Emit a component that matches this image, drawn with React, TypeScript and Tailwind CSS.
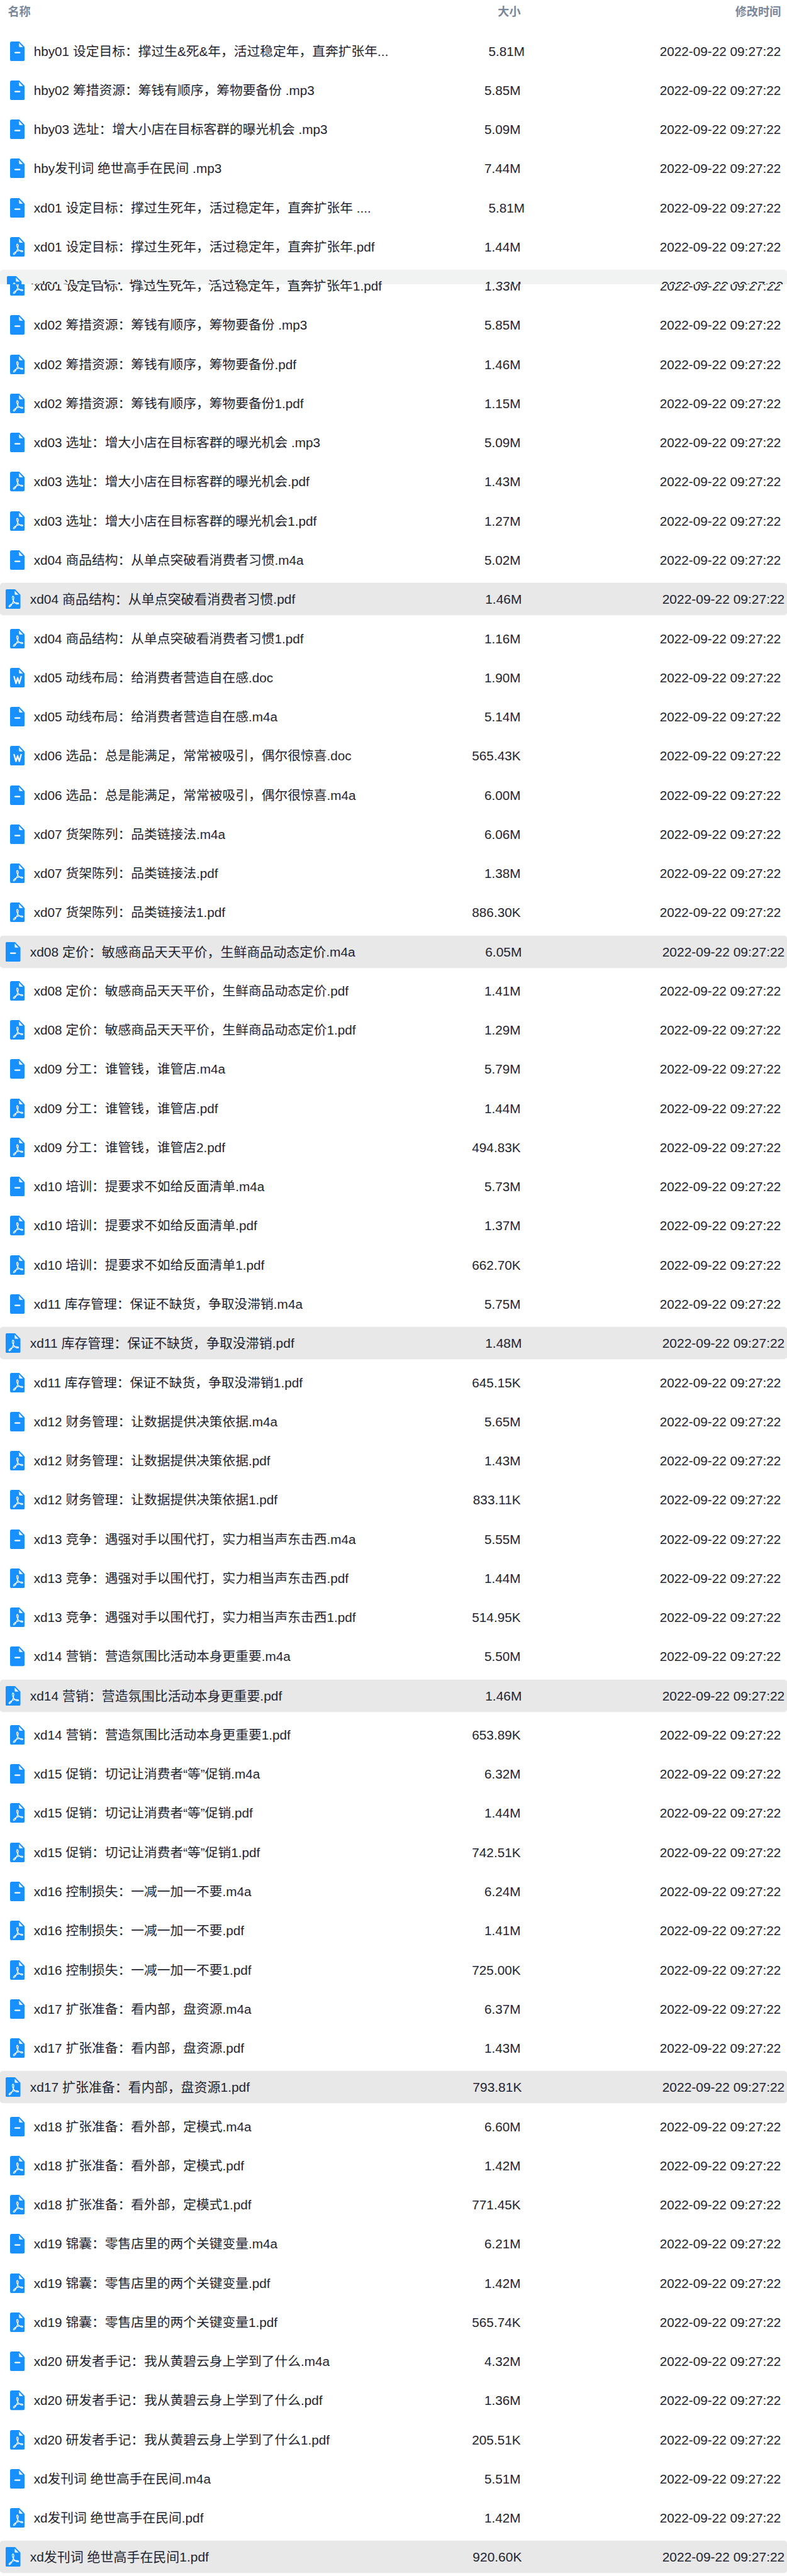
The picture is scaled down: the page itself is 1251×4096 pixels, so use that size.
import React from 'react';

const MODIFIED = '2022-09-22 09:27:22';

type FileRow = {
  name: string;
  size: string;
  active?: boolean;
  wide?: boolean;
  glitch?: boolean;
};

const files: FileRow[] = [
  { name: 'hby01 设定目标：撑过生&死&年，活过稳定年，直奔扩张年...', size: '5.81M', wide: true },
  { name: 'hby02 筹措资源：筹钱有顺序，筹物要备份 .mp3', size: '5.85M' },
  { name: 'hby03 选址：增大小店在目标客群的曝光机会 .mp3', size: '5.09M' },
  { name: 'hby发刊词 绝世高手在民间 .mp3', size: '7.44M' },
  { name: 'xd01 设定目标：撑过生死年，活过稳定年，直奔扩张年 ....', size: '5.81M', wide: true },
  { name: 'xd01 设定目标：撑过生死年，活过稳定年，直奔扩张年.pdf', size: '1.44M' },
  { name: 'xd01 设定目标：撑过生死年，活过稳定年，直奔扩张年1.pdf', size: '1.33M', glitch: true },
  { name: 'xd02 筹措资源：筹钱有顺序，筹物要备份 .mp3', size: '5.85M' },
  { name: 'xd02 筹措资源：筹钱有顺序，筹物要备份.pdf', size: '1.46M' },
  { name: 'xd02 筹措资源：筹钱有顺序，筹物要备份1.pdf', size: '1.15M' },
  { name: 'xd03 选址：增大小店在目标客群的曝光机会 .mp3', size: '5.09M' },
  { name: 'xd03 选址：增大小店在目标客群的曝光机会.pdf', size: '1.43M' },
  { name: 'xd03 选址：增大小店在目标客群的曝光机会1.pdf', size: '1.27M' },
  { name: 'xd04 商品结构：从单点突破看消费者习惯.m4a', size: '5.02M' },
  { name: 'xd04 商品结构：从单点突破看消费者习惯.pdf', size: '1.46M', active: true },
  { name: 'xd04 商品结构：从单点突破看消费者习惯1.pdf', size: '1.16M' },
  { name: 'xd05 动线布局：给消费者营造自在感.doc', size: '1.90M' },
  { name: 'xd05 动线布局：给消费者营造自在感.m4a', size: '5.14M' },
  { name: 'xd06 选品：总是能满足，常常被吸引，偶尔很惊喜.doc', size: '565.43K' },
  { name: 'xd06 选品：总是能满足，常常被吸引，偶尔很惊喜.m4a', size: '6.00M' },
  { name: 'xd07 货架陈列：品类链接法.m4a', size: '6.06M' },
  { name: 'xd07 货架陈列：品类链接法.pdf', size: '1.38M' },
  { name: 'xd07 货架陈列：品类链接法1.pdf', size: '886.30K' },
  { name: 'xd08 定价：敏感商品天天平价，生鲜商品动态定价.m4a', size: '6.05M', active: true },
  { name: 'xd08 定价：敏感商品天天平价，生鲜商品动态定价.pdf', size: '1.41M' },
  { name: 'xd08 定价：敏感商品天天平价，生鲜商品动态定价1.pdf', size: '1.29M' },
  { name: 'xd09 分工：谁管钱，谁管店.m4a', size: '5.79M' },
  { name: 'xd09 分工：谁管钱，谁管店.pdf', size: '1.44M' },
  { name: 'xd09 分工：谁管钱，谁管店2.pdf', size: '494.83K' },
  { name: 'xd10 培训：提要求不如给反面清单.m4a', size: '5.73M' },
  { name: 'xd10 培训：提要求不如给反面清单.pdf', size: '1.37M' },
  { name: 'xd10 培训：提要求不如给反面清单1.pdf', size: '662.70K' },
  { name: 'xd11 库存管理：保证不缺货，争取没滞销.m4a', size: '5.75M' },
  { name: 'xd11 库存管理：保证不缺货，争取没滞销.pdf', size: '1.48M', active: true },
  { name: 'xd11 库存管理：保证不缺货，争取没滞销1.pdf', size: '645.15K' },
  { name: 'xd12 财务管理：让数据提供决策依据.m4a', size: '5.65M' },
  { name: 'xd12 财务管理：让数据提供决策依据.pdf', size: '1.43M' },
  { name: 'xd12 财务管理：让数据提供决策依据1.pdf', size: '833.11K' },
  { name: 'xd13 竞争：遇强对手以围代打，实力相当声东击西.m4a', size: '5.55M' },
  { name: 'xd13 竞争：遇强对手以围代打，实力相当声东击西.pdf', size: '1.44M' },
  { name: 'xd13 竞争：遇强对手以围代打，实力相当声东击西1.pdf', size: '514.95K' },
  { name: 'xd14 营销：营造氛围比活动本身更重要.m4a', size: '5.50M' },
  { name: 'xd14 营销：营造氛围比活动本身更重要.pdf', size: '1.46M', active: true },
  { name: 'xd14 营销：营造氛围比活动本身更重要1.pdf', size: '653.89K' },
  { name: 'xd15 促销：切记让消费者“等”促销.m4a', size: '6.32M' },
  { name: 'xd15 促销：切记让消费者“等”促销.pdf', size: '1.44M' },
  { name: 'xd15 促销：切记让消费者“等”促销1.pdf', size: '742.51K' },
  { name: 'xd16 控制损失：一减一加一不要.m4a', size: '6.24M' },
  { name: 'xd16 控制损失：一减一加一不要.pdf', size: '1.41M' },
  { name: 'xd16 控制损失：一减一加一不要1.pdf', size: '725.00K' },
  { name: 'xd17 扩张准备：看内部，盘资源.m4a', size: '6.37M' },
  { name: 'xd17 扩张准备：看内部，盘资源.pdf', size: '1.43M' },
  { name: 'xd17 扩张准备：看内部，盘资源1.pdf', size: '793.81K', active: true },
  { name: 'xd18 扩张准备：看外部，定模式.m4a', size: '6.60M' },
  { name: 'xd18 扩张准备：看外部，定模式.pdf', size: '1.42M' },
  { name: 'xd18 扩张准备：看外部，定模式1.pdf', size: '771.45K' },
  { name: 'xd19 锦囊：零售店里的两个关键变量.m4a', size: '6.21M' },
  { name: 'xd19 锦囊：零售店里的两个关键变量.pdf', size: '1.42M' },
  { name: 'xd19 锦囊：零售店里的两个关键变量1.pdf', size: '565.74K' },
  { name: 'xd20 研发者手记：我从黄碧云身上学到了什么.m4a', size: '4.32M' },
  { name: 'xd20 研发者手记：我从黄碧云身上学到了什么.pdf', size: '1.36M' },
  { name: 'xd20 研发者手记：我从黄碧云身上学到了什么1.pdf', size: '205.51K' },
  { name: 'xd发刊词 绝世高手在民间.m4a', size: '5.51M' },
  { name: 'xd发刊词 绝世高手在民间.pdf', size: '1.42M' },
  { name: 'xd发刊词 绝世高手在民间1.pdf', size: '920.60K', active: true },
];

const FileIcon = ({ name }: { name: string }) => {
  const isPdf = name.endsWith('.pdf');
  const isDoc = name.endsWith('.doc');
  return (
    <svg viewBox="0 0 36 48" className="h-[31.14px] w-[23.36px] shrink-0">
      <path
        d="M4 0H22.5L36 13.5V44a4 4 0 0 1-4 4H4a4 4 0 0 1-4-4V4a4 4 0 0 1 4-4Z"
        fill="#1890ff"
      />
      <path d="M22 3.5 31.5 13.7H24a2 2 0 0 1-2-2Z" fill="#e8f3ff" />
      {isPdf && (
        <path
          d="M16.5 18C15.5 20 17 26 20 30C23 34 27 36 30 36C33 35 31 33 27 33C20 33 12 36 9 40C7 43 9 44 12 41C15 38 20 27 20 21C20 17 17 16 16.5 18Z"
          fill="none"
          stroke="#fff"
          strokeWidth="2"
        />
      )}
      {isDoc && (
        <polyline
          points="9.5,20 14.5,38 18.5,24 22.5,38 27.5,20"
          fill="none"
          stroke="#fff"
          strokeWidth="3.4"
          strokeLinejoin="round"
        />
      )}
      {!isPdf && !isDoc && <rect x="10.7" y="25.3" width="14.6" height="3.6" rx="1.8" fill="#fff" />}
    </svg>
  );
};

const RowContent = ({ file }: { file: FileRow }) => (
  <>
    <div className={`flex items-center gap-[14.7px] overflow-hidden ${file.wide ? 'w-[726.5px]' : 'w-[720px]'}`}>
      <FileIcon name={file.name} />
      <span className="whitespace-nowrap">{file.name}</span>
    </div>
    <div className="w-[92px] text-right">{file.size}</div>
    <div className="flex-1 text-right">{MODIFIED}</div>
  </>
);

const Row = ({ file }: { file: FileRow }) => {
  if (file.glitch) {
    // half painted hover state: the top of the row is caught mid-transition
    return (
      <div className="relative">
        <div className="mx-[6.2px] flex h-[51.4px] items-center pl-[9.4px] pr-[3.5px]">
          <RowContent file={file} />
        </div>
        <div className="absolute inset-x-0 top-0 h-[23.4px] overflow-hidden rounded-t-[5px] bg-[#f1f3f3]">
          <div className="mx-[6.2px] flex h-[51.4px] scale-[1.0069] items-center pl-[9.4px] pr-[3.5px]">
            <RowContent file={file} />
          </div>
        </div>
      </div>
    );
  }
  return (
    <div
      className={`mx-[6.2px] flex h-[51.4px] items-center rounded-[5px] pl-[9.4px] pr-[3.5px] ${
        file.active ? 'scale-[1.01] bg-[#e8e8e8]' : ''
      }`}
    >
      <RowContent file={file} />
    </div>
  );
};

export default function App() {
  return (
    <div className="min-h-screen bg-white font-['Liberation_Sans','Noto_Sans_CJK_SC',sans-serif] text-[20.76px] text-[#1f2532]">
      <div className="mx-[6.2px] flex h-[39px] items-center pl-[6.2px] pr-[3.5px] text-[18.17px] font-semibold text-[#7a8699]">
        <div className="w-[723.2px]">名称</div>
        <div className="w-[92px] text-right">大小</div>
        <div className="flex-1 text-right">修改时间</div>
      </div>
      <div className="flex flex-col gap-[10.89px] pt-[16.4px]">
        {files.map(file => (
          <Row key={file.name} file={file} />
        ))}
      </div>
    </div>
  );
}
